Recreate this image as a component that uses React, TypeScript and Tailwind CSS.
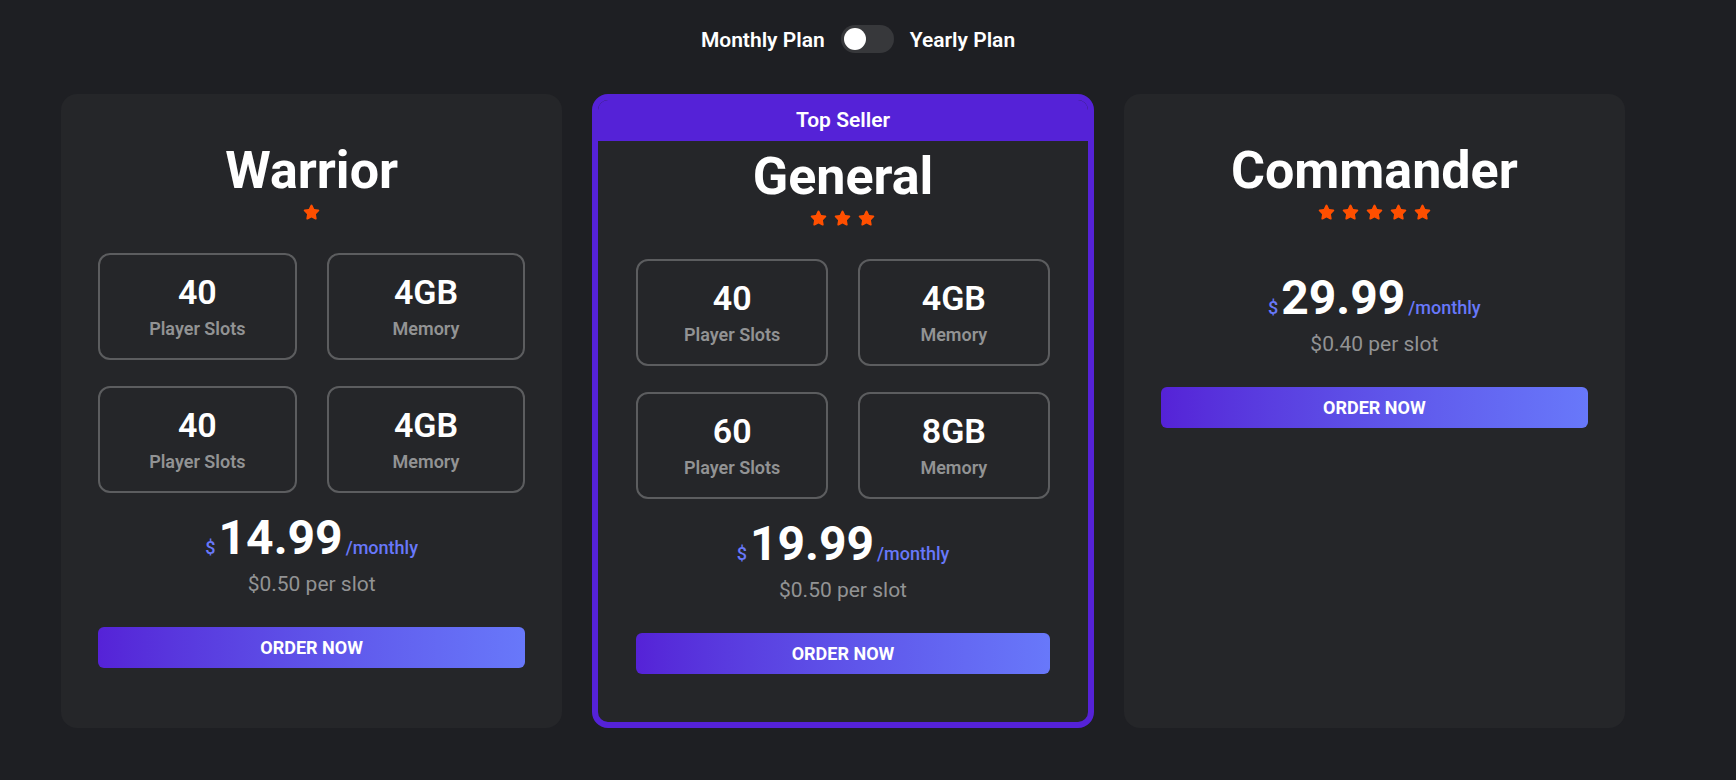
import { useState } from "react";
import { FaStar } from "react-icons/fa6";

interface Spec {
  value: string;
  label: string;
}

interface Plan {
  name: string;
  stars: number;
  specs: Spec[];
  price: string;
  perSlot: string;
  topSeller?: boolean;
}

const plans: Plan[] = [
  {
    name: "Warrior",
    stars: 1,
    specs: [
      { value: "40", label: "Player Slots" },
      { value: "4GB", label: "Memory" },
      { value: "40", label: "Player Slots" },
      { value: "4GB", label: "Memory" },
    ],
    price: "14.99",
    perSlot: "$0.50 per slot",
  },
  {
    name: "General",
    stars: 3,
    specs: [
      { value: "40", label: "Player Slots" },
      { value: "4GB", label: "Memory" },
      { value: "60", label: "Player Slots" },
      { value: "8GB", label: "Memory" },
    ],
    price: "19.99",
    perSlot: "$0.50 per slot",
    topSeller: true,
  },
  {
    name: "Commander",
    stars: 5,
    specs: [],
    price: "29.99",
    perSlot: "$0.40 per slot",
  },
];

function SpecBox({ value, label }: Spec) {
  return (
    <div className="rounded-xl border-2 border-[#5c5d5f] py-4 text-center">
      <p className="text-[34px] leading-[42px] font-semibold text-white">{value}</p>
      <p className="mt-[2px] text-lg leading-[27px] font-semibold text-[#929394]">{label}</p>
    </div>
  );
}

function PlanCard({ plan }: { plan: Plan }) {
  return (
    <article
      className={
        plan.topSeller
          ? "overflow-hidden rounded-2xl border-6 border-[#5522d7] bg-[#252629] px-8"
          : "overflow-hidden rounded-2xl bg-[#252629] px-[31px] pt-[41px]"
      }
    >
      {plan.topSeller && (
        <p className="-mx-8 bg-[#5522d7] text-center text-[21px] leading-[41px] font-semibold text-white">Top Seller</p>
      )}
      <div className="px-[6px] pt-[6px] pb-12">
        <h2 className="text-center text-[52px] leading-[60px] font-bold text-white">{plan.name}</h2>
        <div className="mt-[3px] flex justify-center gap-[7px] text-[#ff4f00]">
          {Array.from({ length: plan.stars }, (_, i) => (
            <FaStar key={i} className="h-4 w-[17px]" />
          ))}
        </div>
        <div className="mt-[33px] grid grid-cols-2 gap-x-[30px] gap-y-[26px]">
          {plan.specs.map((spec, i) => (
            <SpecBox key={i} value={spec.value} label={spec.label} />
          ))}
        </div>
        <p className="mt-[15px] flex items-baseline justify-center gap-[3px] text-lg leading-[28px] font-medium text-[#6878fa]">
          <span>$</span>
          <span className="text-5xl leading-[60px] font-bold text-white">{plan.price}</span>
          <span>/monthly</span>
        </p>
        <p className="mt-[2px] text-center text-[21px] leading-[28px] text-[#929394]">{plan.perSlot}</p>
        <button
          type="button"
          className="mt-[29px] block w-full rounded-md bg-linear-to-r from-[#5522d7] to-[#6878fa] py-[7px] text-lg leading-[27px] font-bold text-white"
        >
          ORDER NOW
        </button>
      </div>
    </article>
  );
}

export default function App() {
  const [yearly, setYearly] = useState(false);

  return (
    <main className="min-h-screen bg-[#1e1f23] pt-[25px] pr-5 pb-12 font-['Roboto',sans-serif]">
      <label className="flex h-7 cursor-pointer items-center justify-center gap-4 text-[21px] font-semibold text-white">
        <span className="pt-[3px]">Monthly Plan</span>
        <input
          type="checkbox"
          role="switch"
          checked={yearly}
          onChange={(e) => setYearly(e.target.checked)}
          className="flex h-7 w-[53px] cursor-pointer appearance-none items-center rounded-full bg-[#37383b] px-[3px] before:size-[22px] before:rounded-full before:bg-white checked:justify-end"
        />
        <span className="pt-[3px]">Yearly Plan</span>
      </label>
      <section className="mt-[41px] mr-[91px] ml-[61px] grid grid-cols-3 gap-[30px]">
        {plans.map((plan) => (
          <PlanCard key={plan.name} plan={plan} />
        ))}
      </section>
    </main>
  );
}
